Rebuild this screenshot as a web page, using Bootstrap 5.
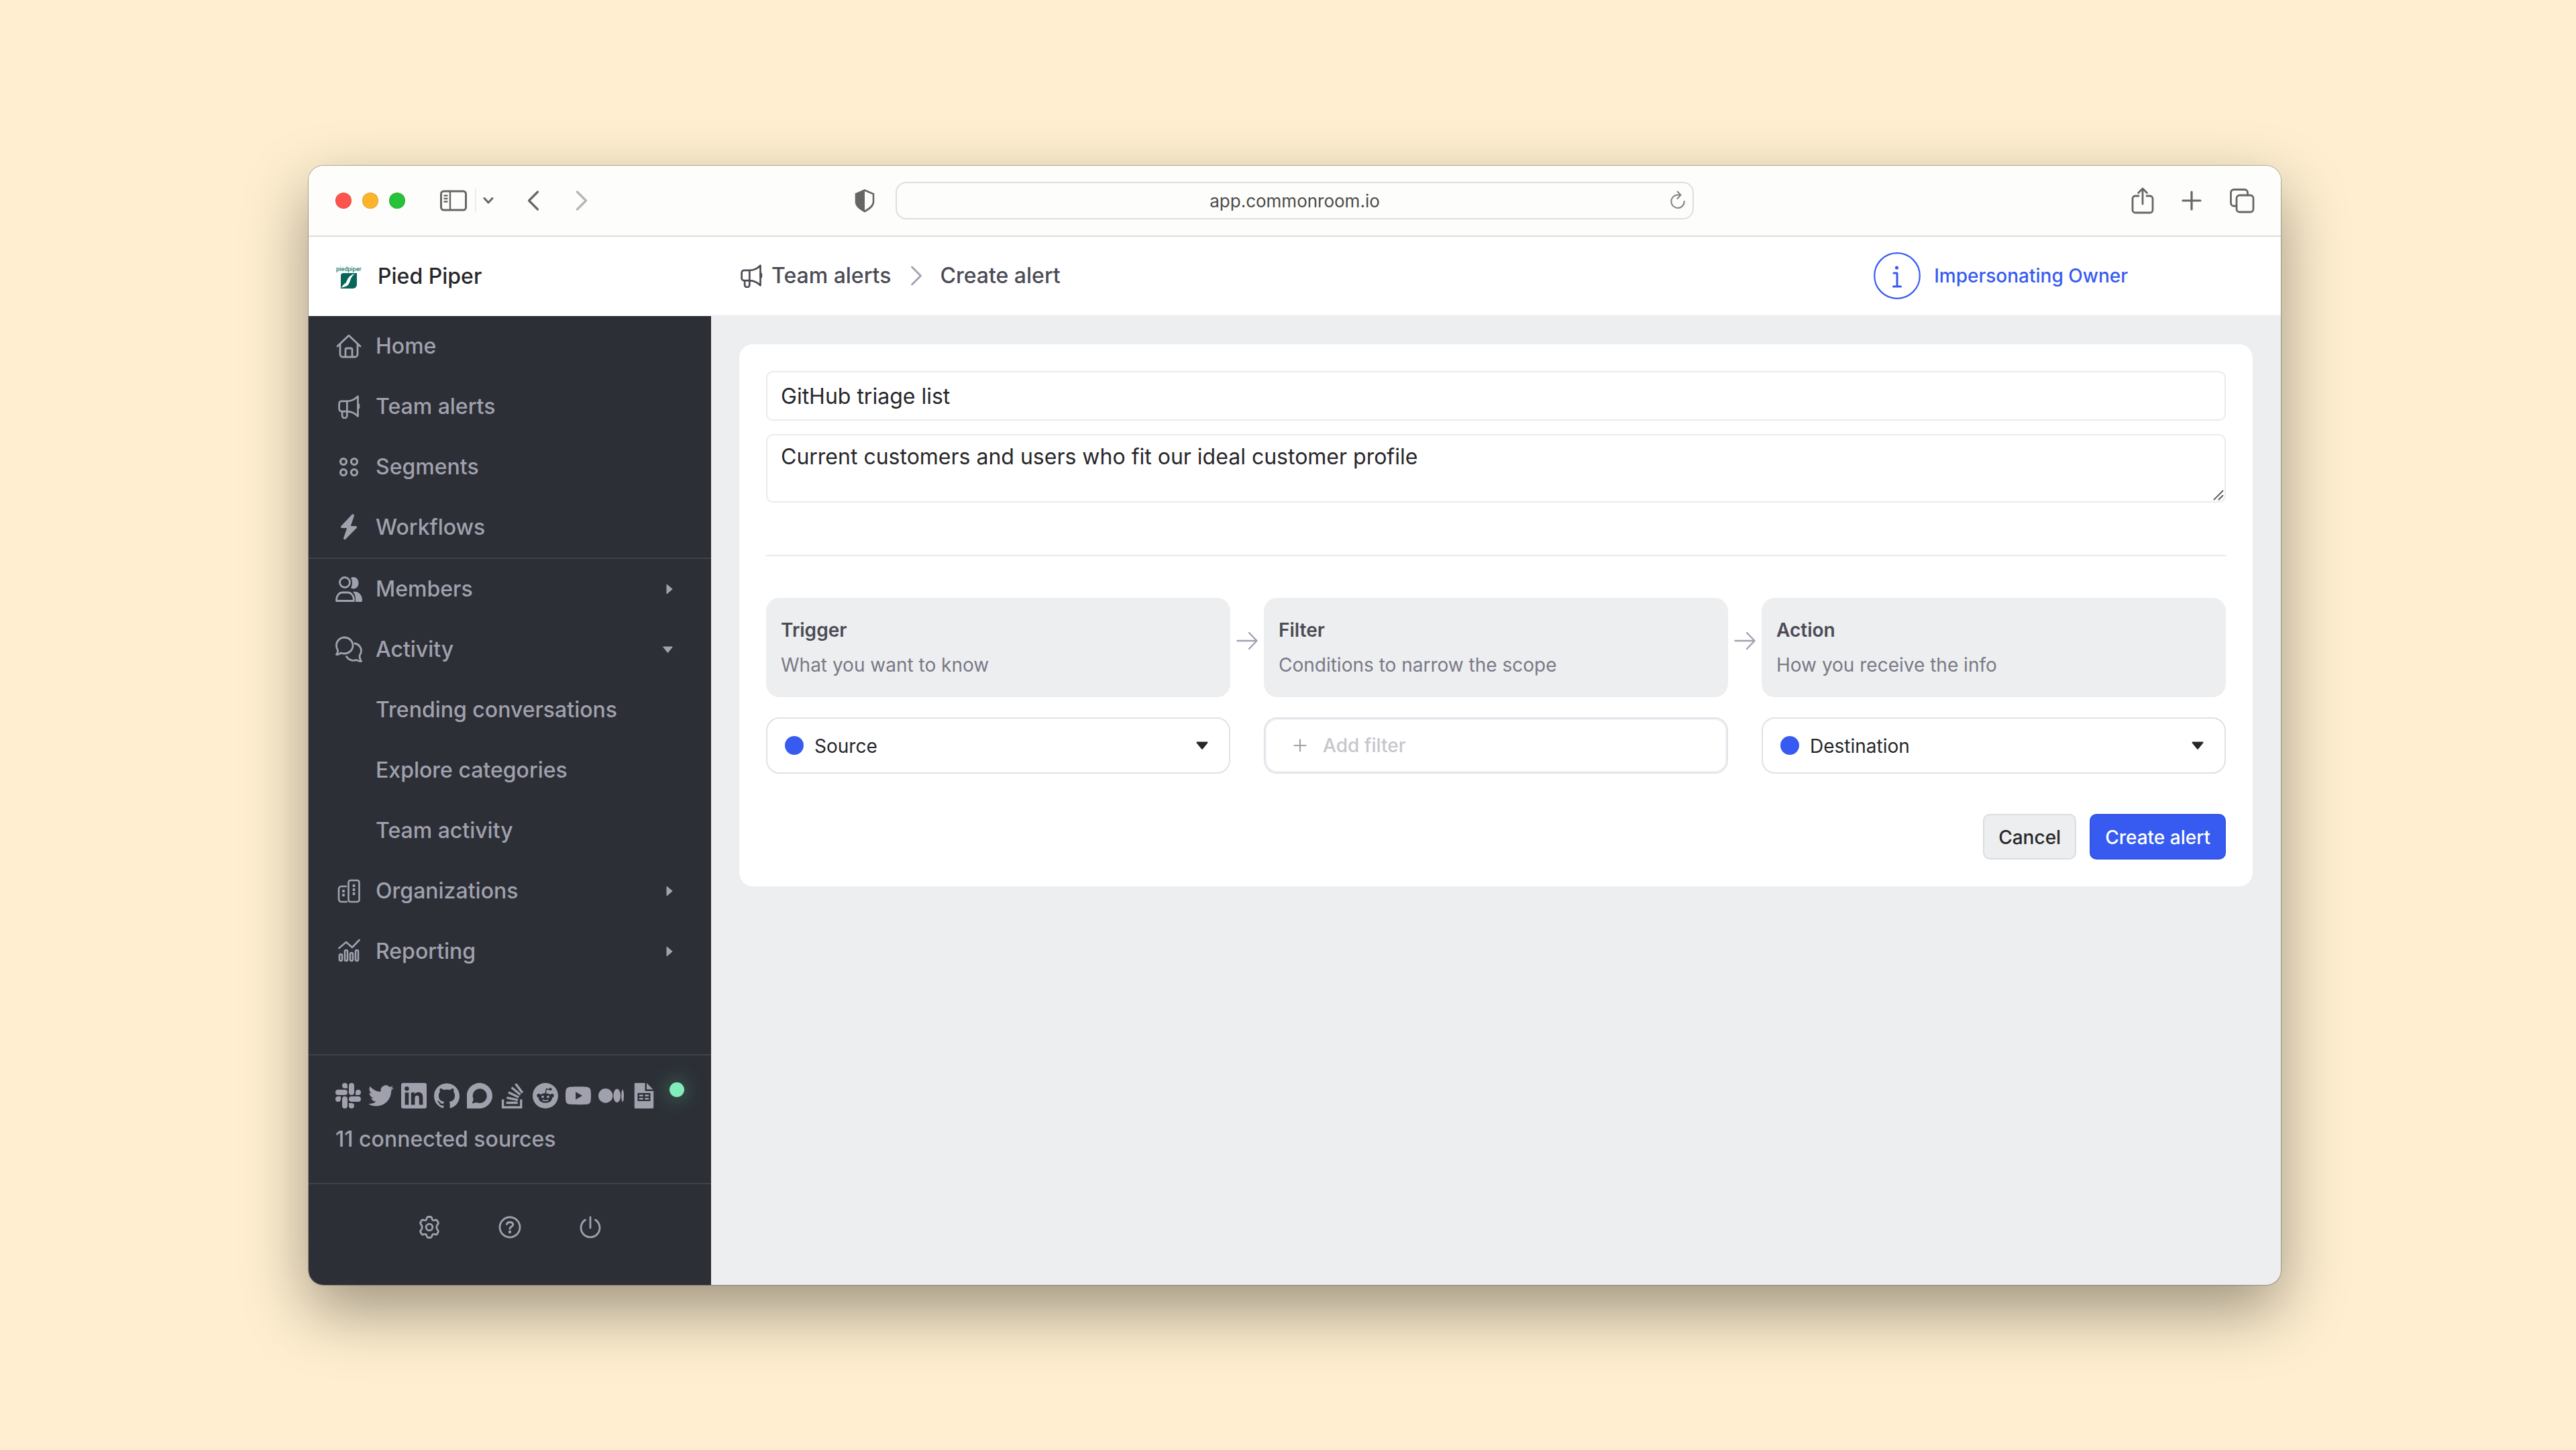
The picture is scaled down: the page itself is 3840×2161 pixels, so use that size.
<!DOCTYPE html>
<html lang="en">
<head>
<meta charset="utf-8">
<title>Create alert</title>
<meta name="viewport" content="width=device-width, initial-scale=1">
<link href="https://cdn.jsdelivr.net/npm/bootstrap@5.3.0/dist/css/bootstrap.min.css" rel="stylesheet">
<style>
  :root { --ink: #27272a; --slate: #4b4b55; --muted: #797986; --side: #2c2f36; --side-text: #a1a1ae; --line: #ebebed; --brand-blue: #375bf0; --panel: #edeef0; }
  body { font-family: Inter, "Liberation Sans", sans-serif; font-size: 32px; line-height: 40px; color: var(--ink); background: #ffefd0; min-height: 100vh; padding: 247px 440px 246px 460px; }
  svg { display: block; flex: none; }
  .ico { fill: none; stroke: currentColor; stroke-linecap: round; stroke-linejoin: round; }
  .window { min-height: calc(100vh - 493px); border-radius: 22px; background: var(--panel); box-shadow: 0 0 0 1px rgba(0,0,0,.25), 0 38px 96px rgba(0,0,0,.39); overflow: hidden; }
  .toolbar { background: #fdfdfb; border-bottom: 2px solid #dcdcda; height: 106px; padding: 0 39px 0 40px; color: #666664; }
  .toolbar button, .side-foot button { background: none; border: 0; padding: 0; color: inherit; }
  .lights { gap: 16px; margin-right: 52px; }
  .light { width: 24px; height: 24px; border-radius: 50%; border: 1px solid rgba(0,0,0,.12); }
  .light-close { background: #fe544d; }
  .light-min { background: #fdb42a; }
  .light-zoom { background: #27c23a; }
  .side-group { width: 761px; }
  .vline { width: 2px; height: 36px; background: #ececea; margin: 0 10px 0 12px; }
  .nav-back { margin: 0 52px 0 49px; }
  .nav-forward { opacity: .48; }
  .shield { margin: 0 30px 0 12px; }
  .address { height: 56px; font-size: 26px; line-height: 32px; border: 2px solid #dededc; border-radius: 16px; background: #fdfdfb; color: #4b4b4a; text-align: center; padding: 0 60px; width: 100%; }
  .reload { color: #828280; }
  .tools { width: 836px; gap: 41px; }
  .topbar { height: 118px; background: #fff; }
  .brand { width: 600px; padding-left: 40px; gap: 23px; font-weight: 500; }
  .crumbs { border-bottom: 2px solid #f3f3f4; padding: 0 228px 0 42px; font-weight: 500; color: var(--slate); }
  .crumbs a { color: inherit; text-decoration: none; margin-left: 12px; }
  .crumb-sep { margin: 0 26px 0 29px; color: #a1a1b2; }
  .owner { color: var(--brand-blue); font-size: 28px; gap: 20px; }
  .sidebar { width: 600px; background: var(--side); color: var(--side-text); }
  .sidebar .nav-link { display: flex; align-items: center; gap: 20px; height: 90px; padding: 0 57px 0 40px; color: inherit; font-weight: 500; }
  .sidebar .nav-link.child { padding-left: 100px; }
  .divide { border-top: 2px solid #3f424a; }
  .sources { padding: 39px 38px 0 40px; height: 192px; font-weight: 500; }
  .glyphs { gap: 11px; height: 42px; margin-bottom: 24px; }
  .glyphs svg { width: 38px; height: 38px; fill: currentColor; }
  .status { flex: none; width: 22px; height: 22px; border-radius: 50%; background: #82edba; box-shadow: 0 0 30px rgba(100,230,160,.55); margin: 0 0 18px 8px; }
  .side-foot { height: 152px; padding-bottom: 22px; gap: 80px; }
  .page-main { padding: 42px; }
  .panel-card { background: #fff; border: 0; border-radius: 20px; padding: 40px; box-shadow: 0 0 0 1px #eaebec; }
  .panel-card .form-control { border: 2px solid var(--line); border-radius: 10px; padding: 16px 20px 14px; font-size: 32px; line-height: 40px; color: var(--ink); min-height: 0; }
  .panel-card textarea.form-control { height: 102px; padding-top: 12px; resize: none; }
  .notes { margin-top: 20px; }
  .grip { right: 3px; bottom: 3px; color: #55555a; }
  .rule { border-top: 2px solid var(--line); margin: 78px 0 62px; }
  .flow { display: grid; grid-template-columns: 1fr 50px 1fr 50px 1fr; row-gap: 30px; font-size: 28px; }
  .step { background: var(--panel); border-radius: 20px; height: 148px; padding: 22px; line-height: 52px; }
  .step h2 { font-size: 28px; font-weight: 600; line-height: 52px; margin: 0; color: var(--slate); }
  .step p { margin: 0; color: var(--muted); }
  .arrow { height: 128px; color: #a1a1b2; }
  .pick { border: 2px solid #e1e1e8; border-radius: 20px; height: 84px; padding: 0 31px 0 26px; gap: 16px; background: #fff; }
  .pick select { appearance: none; border: 0; background: none; font-size: 28px; line-height: 40px; color: var(--ink); padding: 2px 0 0; flex: 1; }
  .bullet { width: 28px; height: 28px; border-radius: 50%; background: var(--brand-blue); }
  .pick-add { color: #c6c6cb; box-shadow: inset 0 0 0 2px #f1f1f5; font-size: 28px; font-weight: 500; padding-left: 42px; gap: 24px; }
  .pick-add svg { color: #a3a3a6; }
  .actions { gap: 20px; margin-top: 60px; }
  .actions .btn { height: 68px; font-size: 28px; line-height: 40px; font-weight: 500; padding: 2px 21px 0; border-width: 2px; border-radius: 10px; }
  .btn-cancel { background: var(--panel); border-color: #dcdde0; color: var(--ink); }
  .btn-create { background: var(--brand-blue); border-color: #3355e0; color: #fff; }
</style>
</head>
<body>
<svg class="d-none" xmlns="http://www.w3.org/2000/svg">
  <symbol id="horn" viewBox="0 0 40 40"><path d="M8 11h9c7 0 13-3 18-8v33c-5-5-11-8-18-8H8a4 4 0 0 1-4-4v-9a4 4 0 0 1 4-4M17 11v17M9 28v7a4 4 0 0 0 8 0v-7"/><path d="M36 17v5" stroke-width="4"/></symbol>
  <symbol id="caret-r" viewBox="0 0 10 16"><path fill="currentColor" stroke="currentColor" stroke-linejoin="round" d="M1 1 9.200 8 1 15z"/></symbol>
  <symbol id="caret-d" viewBox="0 0 18 12"><path fill="currentColor" stroke="currentColor" stroke-width="2" stroke-linejoin="round" d="M1.500 1.500h15L9 10.800z"/></symbol>
  <symbol id="go" viewBox="0 0 32 28"><path d="M1.500 14h29M19 2l11.500 12L19 26"/></symbol>
</svg>

<div class="window d-flex flex-column">
  <header class="toolbar d-flex align-items-center">
    <div class="side-group d-flex align-items-center flex-shrink-0">
      <div class="lights d-flex">
        <span class="light light-close"></span><span class="light light-min"></span><span class="light light-zoom"></span>
      </div>
      <button aria-label="Toggle sidebar"><svg class="ico" width="40" height="32" stroke-width="3" viewBox="0 0 40 32"><rect x="1.500" y="2" width="37" height="28" rx="4"/><path d="M15 2v28M6.500 8.500h4M6.500 13h4M6.500 17.500h4" stroke-width="2.400"/></svg></button>
      <span class="vline"></span>
      <button aria-label="Tab groups"><svg class="ico" width="16" height="12" stroke-width="3" viewBox="0 0 16 12"><path d="M2 2.500 8 9l6-6.500"/></svg></button>
      <button class="nav-back" aria-label="Back"><svg class="ico" width="20" height="32" stroke-width="3.200" viewBox="0 0 20 32"><path d="M16.500 3 3.500 16l13 13"/></svg></button>
      <button class="nav-forward" aria-label="Forward"><svg class="ico" width="20" height="32" stroke-width="3.200" viewBox="0 0 20 32"><path d="M3.500 3l13 13-13 13"/></svg></button>
    </div>
    <svg class="shield" width="32" height="36" viewBox="0 0 32 36"><path d="M16 2.500 3 8v12c0 6 6 10 13 14 7-4 13-8 13-14V8z" fill="none" stroke="currentColor" stroke-width="2.600"/><path d="M16 2 3 8v12c0 6 6 10 13 14z" fill="currentColor"/></svg>
    <div class="position-relative flex-grow-1">
      <input class="address" aria-label="Address" value="app.commonroom.io">
      <svg class="reload ico position-absolute top-50 end-0 translate-middle-y me-2" width="32" height="32" stroke-width="2" viewBox="0 0 32 32"><path d="M20 7.500h-4a9.700 9.700 0 1 0 9.700 9.500M15.500 2.500l5 5-5 5.500"/></svg>
    </div>
    <div class="tools d-flex align-items-center justify-content-end flex-shrink-0">
      <button aria-label="Share"><svg class="ico" width="34" height="40" stroke-width="2.800" viewBox="0 0 34 40"><path d="M11 13H6a4 4 0 0 0-4 4v17a4 4 0 0 0 4 4h22a4 4 0 0 0 4-4V17a4 4 0 0 0-4-4h-5M17 25V3M10.500 8.500 17 2l6.500 6.500"/></svg></button>
      <button aria-label="New tab"><svg class="ico" width="30" height="30" stroke-width="3.200" viewBox="0 0 30 30"><path d="M15 2v26M2 15h26"/></svg></button>
      <button aria-label="Tabs"><svg class="ico" width="38" height="38" stroke-width="2.800" viewBox="0 0 38 38"><rect x="11" y="11" width="25" height="25" rx="4.500"/><path d="M11 27H7a4.500 4.500 0 0 1-4.500-4.500V7A4.500 4.500 0 0 1 7 2.500h16A4.500 4.500 0 0 1 27.500 7v4"/></svg></button>
    </div>
  </header>

  <div class="topbar d-flex">
    <div class="brand d-flex align-items-center">
      <svg width="40" height="40" viewBox="0 0 40 40"><text x="1" y="12" font-size="9" font-family="Roboto" fill="#1f7a70">piedpiper</text><path d="M12 15h20v17a6 6 0 0 1-6 6H8V19a4 4 0 0 1 4-4z" fill="#07665b"/><path d="M29 16c-9 2-11 8-13 13-2 2-5 3-7 8 5-2 9-2 11-6 3-5 2-10 9-15z" fill="#fff"/></svg>
      <span>Pied Piper</span>
    </div>
    <nav class="crumbs d-flex align-items-center flex-grow-1">
      <svg class="ico" width="36" height="36" stroke-width="3"><use href="#horn"/></svg>
      <a href="#">Team alerts</a>
      <svg class="crumb-sep ico" width="18" height="32" stroke-width="2.800" viewBox="0 0 18 32"><path d="M2.500 3l13 13-13 13"/></svg>
      <span>Create alert</span>
      <div class="owner d-flex align-items-center ms-auto">
        <svg class="ico" width="70" height="70" stroke-width="2.200" viewBox="0 0 70 70"><circle cx="35" cy="35" r="33.800"/><path d="M30 31h5v20M29.500 51h11" stroke-width="3"/><circle cx="34.500" cy="23" r="2.600" fill="currentColor" stroke="none"/></svg>
        <span>Impersonating Owner</span>
      </div>
    </nav>
  </div>

  <div class="d-flex flex-grow-1">
    <aside class="sidebar d-flex flex-column">
      <nav class="nav flex-column flex-nowrap">
        <a class="nav-link" href="#"><svg class="ico" width="40" height="40" stroke-width="2.800" viewBox="0 0 40 40"><path d="M3 20 20 4l17 16M7 17v15a4 4 0 0 0 4 4h18a4 4 0 0 0 4-4V17M15 36V25a2 2 0 0 1 2-2h6a2 2 0 0 1 2 2v11"/></svg>Home</a>
        <a class="nav-link" href="#"><svg class="ico" width="40" height="36" stroke-width="3"><use href="#horn"/></svg>Team alerts</a>
        <a class="nav-link" href="#"><svg class="ico" width="40" height="40" stroke-width="3.200" viewBox="0 0 40 40"><circle cx="12" cy="12" r="4.500"/><circle cx="28" cy="12" r="4.500"/><circle cx="12" cy="28" r="4.500"/><circle cx="28" cy="28" r="4.500"/></svg>Segments</a>
        <a class="nav-link" href="#"><svg width="40" height="40" viewBox="0 0 40 40"><path fill="currentColor" d="M24.500 1 8.500 18c-1 1.200-.5 3 1.200 3h7.500l-5 14.500c-.7 2.200 1.500 3.700 3 2L31.500 21c1-1.200.5-3-1.200-3h-7.500l5-15c.5-2.200-1.800-3.500-3.300-2z"/></svg>Workflows</a>
        <div class="divide"></div>
        <a class="nav-link" href="#"><svg class="ico" width="40" height="40" stroke-width="2.800" viewBox="0 0 40 40"><circle cx="14" cy="10" r="7.500"/><path d="M1.500 37.500c0-8 4-12.500 9-12.500h8c5 0 9 4.500 9 12.500z"/><path stroke="none" fill="currentColor" d="M23 3c7-3 11.500 2 11.500 8s-5 10.500-11.500 7.500c2.500-4.500 2.500-11 0-15.500zM26 24c9-1.500 14 5 14 13 0 1.500-1 2-2 2h-8c0-6 0-11-4-15z"/></svg>Members<svg class="ms-auto" width="10" height="16"><use href="#caret-r"/></svg></a>
        <a class="nav-link" href="#"><svg class="ico" width="40" height="40" stroke-width="2.800" viewBox="0 0 40 40"><path d="M13.500 2C20 2 26 7 26 14s-6 12-12.500 12c-2 0-4-.5-5.500-1-2 2-4 3-6.500 2.500C3.500 25 4 23 3.500 21 2 19 1.500 17 1.500 14 1.500 7 7 2 13.500 2zM29 11c6 1 9.500 6 9.500 11 0 3-1 5-2.500 7 0 3 .5 6 2.500 8.500-3 .5-5-.5-7-2-6 2-12 0-15-5"/></svg>Activity<svg class="ms-auto" width="15" height="10"><use href="#caret-d"/></svg></a>
        <a class="nav-link child" href="#">Trending conversations</a>
        <a class="nav-link child" href="#">Explore categories</a>
        <a class="nav-link child" href="#">Team activity</a>
        <a class="nav-link" href="#"><svg class="ico" width="40" height="40" stroke-width="2.600" viewBox="0 0 40 40"><rect x="19.500" y="4" width="16" height="32" rx="3"/><path d="M16 13H9a4 4 0 0 0-4 4v15a4 4 0 0 0 4 4h8"/><path stroke-width="3.600" stroke-linecap="butt" d="M27.500 10v4M27.500 16v4M27.500 22v4M12 18v4M12 24v4"/></svg>Organizations<svg class="ms-auto" width="10" height="16"><use href="#caret-r"/></svg></a>
        <a class="nav-link" href="#"><svg class="ico" width="40" height="40" stroke-width="2.600" viewBox="0 0 40 40"><path d="M5.500 15 16 6l9 8L35.500 3"/><rect x="6" y="24" width="4" height="10" rx="2"/><rect x="14" y="18" width="4" height="16" rx="2"/><rect x="22" y="22" width="4" height="12" rx="2"/><rect x="30" y="18" width="4" height="16" rx="2"/></svg>Reporting<svg class="ms-auto" width="10" height="16"><use href="#caret-r"/></svg></a>
      </nav>
      <section class="sources divide mt-auto">
        <div class="glyphs d-flex align-items-center">
          <svg viewBox="0 0 24 24"><path d="M5.042 15.165a2.528 2.528 0 0 1-2.520 2.523A2.528 2.528 0 0 1 0 15.165a2.527 2.527 0 0 1 2.522-2.520h2.520v2.520zM6.313 15.165a2.527 2.527 0 0 1 2.521-2.520 2.527 2.527 0 0 1 2.521 2.520v6.313A2.528 2.528 0 0 1 8.834 24a2.528 2.528 0 0 1-2.521-2.522v-6.313zM8.834 5.042a2.528 2.528 0 0 1-2.521-2.520A2.528 2.528 0 0 1 8.834 0a2.528 2.528 0 0 1 2.521 2.522v2.520H8.834zM8.834 6.313a2.528 2.528 0 0 1 2.521 2.521 2.528 2.528 0 0 1-2.521 2.521H2.522A2.528 2.528 0 0 1 0 8.834a2.528 2.528 0 0 1 2.522-2.521h6.312zM18.956 8.834a2.528 2.528 0 0 1 2.522-2.521A2.528 2.528 0 0 1 24 8.834a2.528 2.528 0 0 1-2.522 2.521h-2.522V8.834zM17.688 8.834a2.528 2.528 0 0 1-2.523 2.521 2.527 2.527 0 0 1-2.520-2.521V2.522A2.527 2.527 0 0 1 15.165 0a2.528 2.528 0 0 1 2.523 2.522v6.312zM15.165 18.956a2.528 2.528 0 0 1 2.523 2.522A2.528 2.528 0 0 1 15.165 24a2.527 2.527 0 0 1-2.520-2.522v-2.522h2.520zM15.165 17.688a2.527 2.527 0 0 1-2.520-2.523 2.526 2.526 0 0 1 2.520-2.520h6.313A2.527 2.527 0 0 1 24 15.165a2.528 2.528 0 0 1-2.522 2.523h-6.313z"/></svg>
          <svg viewBox="0 0 24 24"><path d="M23.953 4.570a10 10 0 01-2.825.775 4.958 4.958 0 002.163-2.723c-.951.555-2.005.959-3.127 1.184a4.920 4.920 0 00-8.384 4.482C7.690 8.095 4.067 6.130 1.640 3.162a4.822 4.822 0 00-.666 2.475c0 1.710.870 3.213 2.188 4.096a4.904 4.904 0 01-2.228-.616v.060a4.923 4.923 0 003.946 4.827 4.996 4.996 0 01-2.212.085 4.936 4.936 0 004.604 3.417 9.867 9.867 0 01-6.102 2.105c-.390 0-.779-.023-1.170-.067a13.995 13.995 0 007.557 2.209c9.053 0 13.998-7.496 13.998-13.985 0-.210 0-.420-.015-.630A9.935 9.935 0 0024 4.590z"/></svg>
          <svg viewBox="0 0 24 24"><path d="M20.447 20.452h-3.554v-5.569c0-1.328-.027-3.037-1.852-3.037-1.853 0-2.136 1.445-2.136 2.939v5.667H9.351V9h3.414v1.561h.046c.477-.900 1.637-1.850 3.370-1.850 3.601 0 4.267 2.370 4.267 5.455v6.286zM5.337 7.433a2.062 2.062 0 0 1-2.063-2.065 2.064 2.064 0 1 1 2.063 2.065zm1.782 13.019H3.555V9h3.564v11.452zM22.225 0H1.771C.792 0 0 .774 0 1.729v20.542C0 23.227.792 24 1.771 24h20.451C23.200 24 24 23.227 24 22.271V1.729C24 .774 23.200 0 22.222 0h.003z"/></svg>
          <svg viewBox="0 0 24 24"><path d="M12 .297c-6.630 0-12 5.373-12 12 0 5.303 3.438 9.800 8.205 11.385.600.113.820-.258.820-.577 0-.285-.010-1.040-.015-2.040-3.338.724-4.042-1.610-4.042-1.610C4.422 18.070 3.633 17.700 3.633 17.700c-1.087-.744.084-.729.084-.729 1.205.084 1.838 1.236 1.838 1.236 1.070 1.835 2.809 1.305 3.495.998.108-.776.417-1.305.760-1.605-2.665-.300-5.466-1.332-5.466-5.930 0-1.310.465-2.380 1.235-3.220-.135-.303-.540-1.523.105-3.176 0 0 1.005-.322 3.300 1.230.960-.267 1.980-.399 3-.405 1.020.006 2.040.138 3 .405 2.280-1.552 3.285-1.230 3.285-1.230.645 1.653.240 2.873.120 3.176.765.840 1.230 1.910 1.230 3.220 0 4.610-2.805 5.625-5.475 5.920.420.360.810 1.096.810 2.220 0 1.606-.015 2.896-.015 3.286 0 .315.210.690.825.570C20.565 22.092 24 17.592 24 12.297c0-6.627-5.373-12-12-12"/></svg>
          <svg viewBox="0 0 24 24"><path fill-rule="evenodd" d="M12.100 0C5.700 0 0 5.100 0 11.800V24h12.100C18.700 24 24 18.300 24 12S18.700 0 12.100 0zM12 5.400a6.800 6.800 0 1 1-3 12.900l-4.100.9 1.300-3.900A6.800 6.800 0 0 1 12 5.400z"/></svg>
          <svg viewBox="0 0 24 24"><path d="M18.986 21.865v-6.404h2.134V24H1.844v-8.539h2.130v6.404h15.012zM6.111 19.731H16.850v-2.137H6.111v2.137zm.259-4.852l10.480 2.189.451-2.070-10.478-2.187-.453 2.068zm1.359-5.056l9.705 4.530.903-1.950-9.706-4.530-.902 1.936v.014zm2.715-4.785l8.217 6.855 1.359-1.620-8.216-6.853-1.350 1.617-.010.001zM15.751 0l-1.746 1.294 6.405 8.604 1.746-1.294L15.749 0h.002z"/></svg>
          <svg viewBox="0 0 24 24"><circle cx="12" cy="12" r="12"/><g fill="#2c2f36"><ellipse cx="12" cy="14.200" rx="6.400" ry="4.600"/><circle cx="5.800" cy="11.900" r="1.800"/><circle cx="18.200" cy="11.900" r="1.800"/><circle cx="16.800" cy="5.800" r="1.300"/><path d="m11.500 10 1.200-5 4 .9-.2.900-3.200-.7-.9 4z"/></g><circle cx="9.500" cy="13" r="1.200"/><circle cx="14.500" cy="13" r="1.200"/><path d="M9.300 15.800c1.500 1.200 3.900 1.200 5.400 0" fill="none" stroke="currentColor"/></svg>
          <svg viewBox="0 0 24 24"><path d="M23.498 6.186a3.016 3.016 0 0 0-2.122-2.136C19.505 3.545 12 3.545 12 3.545s-7.505 0-9.377.505A3.017 3.017 0 0 0 .502 6.186C0 8.070 0 12 0 12s0 3.930.502 5.814a3.016 3.016 0 0 0 2.122 2.136c1.871.505 9.376.505 9.376.505s7.505 0 9.377-.505a3.015 3.015 0 0 0 2.122-2.136C24 15.930 24 12 24 12s0-3.930-.502-5.814zM9.545 15.568V8.432L15.818 12l-6.273 3.568z"/></svg>
          <svg viewBox="0 0 24 24"><circle cx="6.770" cy="12" r="6.770"/><ellipse cx="17.520" cy="12" rx="3.380" ry="6.420"/><ellipse cx="22.800" cy="12" rx="1.200" ry="5.750"/></svg>
          <svg viewBox="0 0 24 24"><path fill-rule="evenodd" d="M4 0h9v7.500h8V23a1 1 0 0 1-1 1H4a1 1 0 0 1-1-1V1a1 1 0 0 1 1-1zM6 9.500v7.500h12V9.500zM7.500 11h3.700v1.600H7.500zM12.800 11h3.700v1.600h-3.700zM7.500 14h3.700v1.600H7.500zM12.800 14h3.700v1.600h-3.700zM14.500 0l6 6h-6z"/></svg>
          <span class="status"></span>
        </div>
        <div>11 connected sources</div>
      </section>
      <footer class="side-foot divide d-flex align-items-center justify-content-center">
        <button aria-label="Settings"><svg class="ico" width="40" height="40" stroke-width="2.800" viewBox="0 0 40 40"><path d="M16 7.500c.4-2 1-3 2.500-3h3c1.500 0 2.100 1 2.500 3s2 2.800 3.800 2 3-.8 3.900.8l1.400 2.500c.8 1.400.2 2.400-1.200 3.700s-1.400 5.700 0 7 2 2.300 1.200 3.700l-1.400 2.500c-.9 1.600-2.100 1.600-3.900.8s-3.400 0-3.800 2-1 3-2.500 3h-3c-1.500 0-2.100-1-2.500-3s-2-2.800-3.800-2-3 .8-3.900-.8l-1.400-2.500c-.8-1.400-.2-2.400 1.200-3.700s1.400-5.700 0-7-2-2.300-1.200-3.700l1.400-2.500c.9-1.600 2.100-1.600 3.900-.8s3.400 0 3.800-2z"/><circle cx="20" cy="20" r="4.800"/></svg></button>
        <button aria-label="Help"><svg class="ico" width="40" height="40" stroke-width="2.800" viewBox="0 0 40 40"><circle cx="20" cy="20" r="15"/><path d="M15.500 15.500c.5-2 2-3 4.500-3 3 0 4.700 1.500 4.700 3.800 0 3-4.700 3-4.700 6" stroke-width="3"/><circle cx="20" cy="27" r="2.200" fill="currentColor" stroke="none"/></svg></button>
        <button aria-label="Sign out"><svg class="ico" width="40" height="40" stroke-width="2.800" viewBox="0 0 40 40"><path d="M20 5v16M12.500 9a14 14 0 1 0 15 0"/></svg></button>
      </footer>
    </aside>

    <main class="page-main flex-grow-1">
      <form class="card panel-card">
        <input class="form-control" aria-label="Alert name" value="GitHub triage list">
        <div class="notes position-relative">
          <textarea class="form-control" aria-label="Description">Current customers and users who fit our ideal customer profile</textarea>
          <svg class="grip ico position-absolute" width="16" height="16" stroke-width="1.800" viewBox="0 0 16 16"><path d="M1.500 14.500l13-13M8.500 14.500l6-6"/></svg>
        </div>
        <div class="rule"></div>
        <div class="flow">
          <div class="step"><h2>Trigger</h2><p>What you want to know</p></div>
          <div class="arrow d-flex align-items-center justify-content-center"><svg class="ico" width="32" height="28" stroke-width="2.400"><use href="#go"/></svg></div>
          <div class="step"><h2>Filter</h2><p>Conditions to narrow the scope</p></div>
          <div class="arrow d-flex align-items-center justify-content-center"><svg class="ico" width="32" height="28" stroke-width="2.400"><use href="#go"/></svg></div>
          <div class="step"><h2>Action</h2><p>How you receive the info</p></div>
          <label class="pick d-flex align-items-center"><span class="bullet"></span><select aria-label="Source"><option>Source</option></select><svg width="18" height="12"><use href="#caret-d"/></svg></label>
          <span></span>
          <button type="button" class="pick pick-add d-flex align-items-center"><svg class="ico" width="20" height="20" stroke-width="2.200" viewBox="0 0 20 20"><path d="M10 1.500v17M1.500 10h17"/></svg>Add filter</button>
          <span></span>
          <label class="pick d-flex align-items-center"><span class="bullet"></span><select aria-label="Destination"><option>Destination</option></select><svg width="18" height="12"><use href="#caret-d"/></svg></label>
        </div>
        <div class="actions d-flex justify-content-end">
          <button type="button" class="btn btn-cancel">Cancel</button>
          <button type="submit" class="btn btn-create">Create alert</button>
        </div>
      </form>
    </main>
  </div>
</div>
<script src="https://cdn.jsdelivr.net/npm/bootstrap@5.3.0/dist/js/bootstrap.bundle.min.js"></script>
</body>
</html>
